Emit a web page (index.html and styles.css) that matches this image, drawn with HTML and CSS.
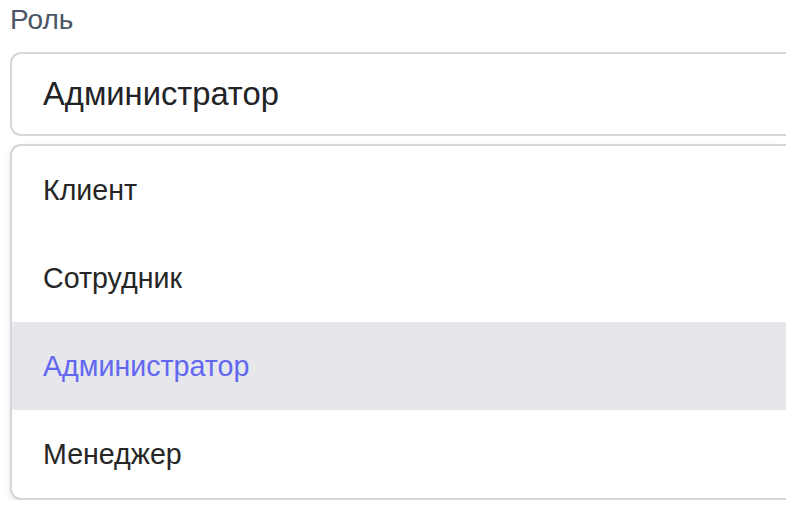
FILE: index.html
```html
<!DOCTYPE html>
<html lang="ru">
<head>
<meta charset="utf-8">
<title>Роль</title>
<link rel="stylesheet" href="styles.css">
</head>
<body>
<div class="field">
  <label class="label">Роль</label>
  <div class="select">Администратор</div>
  <ul class="menu">
    <li class="option">Клиент</li>
    <li class="option">Сотрудник</li>
    <li class="option active">Администратор</li>
    <li class="option">Менеджер</li>
  </ul>
</div>
</body>
</html>
```
FILE: styles.css
```css
html, body {
  margin: 0;
  padding: 0;
  background: #ffffff;
  overflow: hidden;
}
body {
  font-family: "Liberation Sans", Arial, sans-serif;
}
.field {
  padding-left: 10px;
}
.label {
  display: block;
  font-size: 28px;
  line-height: 40px;
  color: #4b5563;
  margin-bottom: 12px;
}
.select {
  box-sizing: border-box;
  height: 84px;
  border: 2px solid #d4d6db;
  border-right: none;
  border-radius: 11px 0 0 11px;
  padding-left: 31px;
  font-size: 32.7px;
  line-height: 80px;
  color: #222326;
}
.menu {
  list-style: none;
  margin: 8px 0 0 0;
  padding: 0;
  border: 2px solid #d4d6db;
  border-right: none;
  border-radius: 11px 0 0 11px;
  box-shadow: 0 4px 10px rgba(0, 0, 0, 0.07), 0 2px 3px rgba(0, 0, 0, 0.05);
  overflow: hidden;
  background: #fff;
}
.option {
  height: 88px;
  line-height: 88px;
  padding-left: 31px;
  font-size: 28.6px;
  color: #262626;
}
.option.active {
  background: #e5e7eb;
  color: #6366f1;
}
```
